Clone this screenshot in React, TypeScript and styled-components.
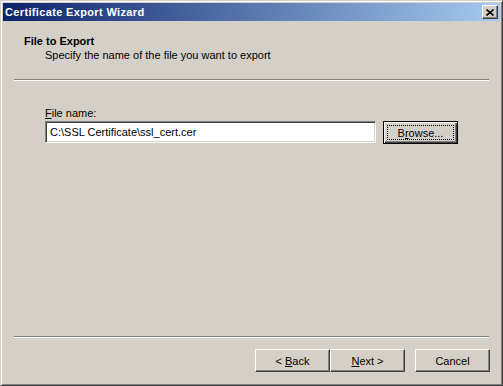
import * as React from "react";
import styled, { createGlobalStyle } from "styled-components";

const GlobalStyle = createGlobalStyle`
  html, body {
    margin: 0;
    padding: 0;
    background: #d4d0c8;
  }
  body {
    font-family: "Liberation Sans", Arial, sans-serif;
    font-size: 11px;
    color: #000;
  }
`;

const Window = styled.div`
  width: 503px;
  height: 386px;
  box-sizing: border-box;
  background: #d4d0c8;
  border: 1px solid;
  border-color: #d4d0c8 #404040 #404040 #d4d0c8;
  box-shadow: inset 1px 1px #ffffff, inset -1px -1px #808080;
  padding: 2px 2px 2px 2px;
  display: flex;
  flex-direction: column;
`;

const TitleBar = styled.div`
  height: 18px;
  flex: none;
  display: flex;
  align-items: center;
  justify-content: space-between;
  padding: 0 2px 0 2px;
  background: linear-gradient(to right, #0a246a, #a6caf0);
`;

const TitleText = styled.span`
  color: #ffffff;
  font-weight: bold;
  font-size: 11px;
  letter-spacing: 0.35px;
`;

const CloseButton = styled.div`
  width: 16px;
  height: 14px;
  box-sizing: border-box;
  background: #d4d0c8;
  border: 1px solid;
  border-color: #ffffff #404040 #404040 #ffffff;
  box-shadow: inset -1px -1px #808080;
  display: flex;
  align-items: center;
  justify-content: center;
`;

const Header = styled.div`
  padding: 13px 0 0 21px;
  flex: none;
`;

const HeaderTitle = styled.div`
  font-weight: bold;
  line-height: 14px;
`;

const HeaderSub = styled.div`
  line-height: 14px;
  padding-left: 21px;
`;

const Separator = styled.div<{ $top: number }>`
  height: 0;
  flex: none;
  margin: ${(p) => p.$top}px 11px 0 11px;
  border-top: 1px solid #808080;
  border-bottom: 1px solid #ffffff;
`;

const Content = styled.div`
  padding: 25px 0 0 42px;
  flex: 1;
`;

const Label = styled.div`
  line-height: 14px;
  margin-bottom: 1px;
`;

const FieldRow = styled.div`
  display: flex;
  align-items: flex-start;
  gap: 7px;
`;

const TextBox = styled.div`
  width: 331px;
  height: 22px;
  box-sizing: border-box;
  background: #ffffff;
  border: 1px solid;
  border-color: #808080 #ffffff #ffffff #808080;
  box-shadow: inset 1px 1px #404040, inset -1px -1px #d4d0c8;
  padding: 0 0 0 4px;
  display: flex;
  align-items: center;
  white-space: nowrap;
`;

const Button = styled.div<{ $default?: boolean }>`
  width: 75px;
  height: 23px;
  box-sizing: border-box;
  background: #d4d0c8;
  position: relative;
  display: flex;
  align-items: center;
  justify-content: center;
  white-space: pre;
  border: 1px solid;
  border-color: ${(p) => (p.$default ? "#000 #000 #000 #000" : "#ffffff #404040 #404040 #ffffff")};
  box-shadow: ${(p) =>
    p.$default
      ? "inset 1px 1px #ffffff, inset -1px -1px #404040, inset -2px -2px #808080"
      : "inset -1px -1px #808080"};
`;

const FocusRing = styled.div`
  position: absolute;
  inset: 3px;
  border: 1px dotted #000;
`;

const Footer = styled.div`
  display: flex;
  justify-content: flex-end;
  padding: 11px 10px 11px 0;
  flex: none;
`;

const ButtonPair = styled.div`
  display: flex;
  margin-right: 10px;
`;

const Key = styled.span`
  text-decoration: underline;
`;

export default function App() {
  return (
    <>
      <GlobalStyle />
      <Window>
        <TitleBar>
          <TitleText>Certificate Export Wizard</TitleText>
          <CloseButton>
            <svg width="8" height="7" viewBox="0 0 8 7">
              <path d="M0.5 0.5 L7.5 6.5 M7.5 0.5 L0.5 6.5" stroke="#000" strokeWidth="1.6" />
            </svg>
          </CloseButton>
        </TitleBar>
        <Header>
          <HeaderTitle>File to Export</HeaderTitle>
          <HeaderSub>Specify the name of the file you want to export</HeaderSub>
        </Header>
        <Separator $top={17} />
        <Content>
          <Label>
            <Key>F</Key>ile name:
          </Label>
          <FieldRow>
            <TextBox>C:\SSL Certificate\ssl_cert.cer</TextBox>
            <Button $default>
              <FocusRing />
              <span>
                B<Key>r</Key>owse...
              </span>
            </Button>
          </FieldRow>
        </Content>
        <Separator $top={0} />
        <Footer>
          <ButtonPair>
            <Button>
              <span>
                {"< "}
                <Key>B</Key>ack
              </span>
            </Button>
            <Button>
              <span>
                <Key>N</Key>
                {"ext >"}
              </span>
            </Button>
          </ButtonPair>
          <Button>Cancel</Button>
        </Footer>
      </Window>
    </>
  );
}
